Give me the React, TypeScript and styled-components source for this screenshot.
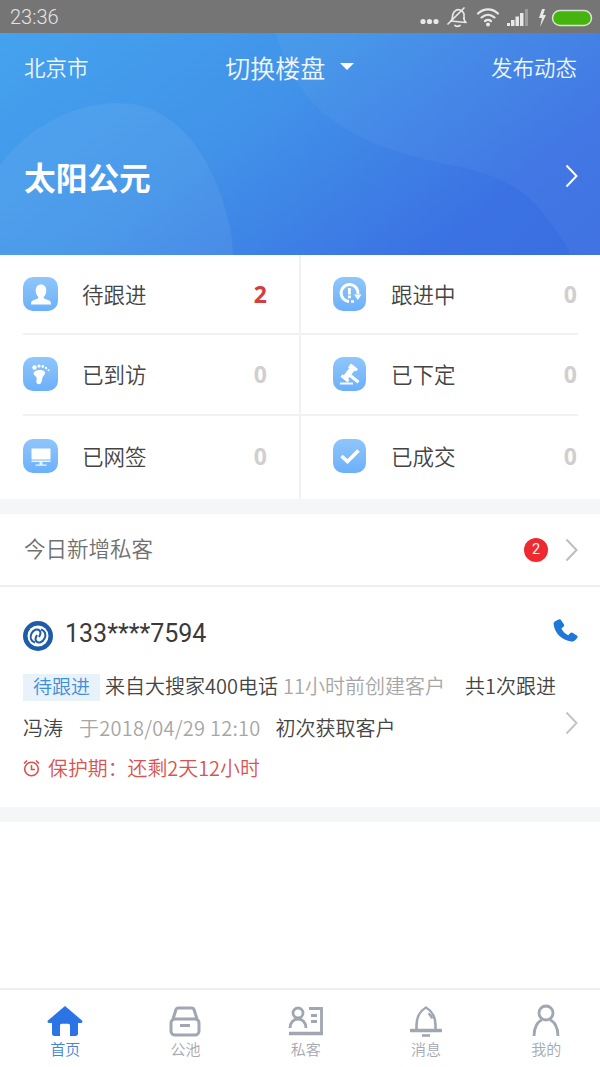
import React from 'react'
import styled, { createGlobalStyle } from 'styled-components'

const GlobalStyle = createGlobalStyle`
  html, body { margin: 0; padding: 0; background: #fff; }
  body { font-family: "Noto Sans CJK SC", "Noto Sans", sans-serif; font-weight: 350; }
  * { box-sizing: border-box; }
`

const Page = styled.div`
  width: 600px;
  height: 1067px;
  display: flex;
  flex-direction: column;
  overflow: hidden;
  background: #fff;
`

const StatusBar = styled.div`
  height: 33px;
  flex: none;
  background: #757575;
  display: flex;
  align-items: center;
  justify-content: space-between;
  padding: 0 0 0 10px;
  color: #e4e4e4;
`

const Clock = styled.span`
  font: 300 20px Roboto, sans-serif;
`

const StatusIcons = styled.div`
  display: flex;
  align-items: center;
`

const Hero = styled.header`
  position: relative;
  height: 222px;
  flex: none;
  overflow: hidden;
  background: linear-gradient(142deg, #45a2ee 0%, #4193e9 40%, #3b72e3 80%, #3a6ee2 100%);
  color: #fff;
`

const HeroShapes = styled.svg`
  position: absolute;
  inset: 0;
`

const HeroTop = styled.div`
  position: relative;
  height: 67px;
  display: flex;
  align-items: center;
  justify-content: space-between;
  padding: 0 23px 0 24px;
`

const HeroSide = styled.span`
  font-size: 21.5px;
  color: #eef6fd;
`

const Switcher = styled.div`
  display: flex;
  align-items: center;
  gap: 15px;
  font-size: 25px;
  color: #eef6fd;
`

const Caret = styled.i`
  width: 0;
  height: 0;
  border-left: 7.5px solid transparent;
  border-right: 7.5px solid transparent;
  border-top: 7px solid #fff;
`

const HeroTitleRow = styled.div`
  position: relative;
  height: 86px;
  margin-top: 33px;
  display: flex;
  align-items: center;
  justify-content: space-between;
  padding: 0 22px 0 24px;
`

const HeroTitle = styled.h1`
  margin: -1px 0 0;
  font-size: 31.7px;
  font-weight: 700;
  color: #fff;
`

const StatGrid = styled.section`
  height: 244px;
  flex: none;
  display: grid;
  grid-template-columns: 300px 300px;
  grid-template-rows: 80px 81px 83px;
`

const StatCell = styled.div<{ $right?: boolean }>`
  padding-left: ${p => (p.$right ? '0' : '23px')};
  padding-right: ${p => (p.$right ? '22px' : '0')};
  border-left: ${p => (p.$right ? '2px solid #f1f2f3' : 'none')};
  margin-left: ${p => (p.$right ? '-1px' : '0')};
`

const StatInner = styled.div<{ $right?: boolean; $last?: boolean }>`
  height: 100%;
  display: flex;
  align-items: center;
  padding: ${p => (p.$last ? '0 0 3px' : '0 0 1px')};
  padding-left: ${p => (p.$right ? '32px' : '0')};
  padding-right: ${p => (p.$right ? '1px' : '33px')};
  border-bottom: ${p => (p.$last ? 'none' : '2px solid #f0f1f2')};
`

const StatIcon = styled.div<{ $right?: boolean }>`
  width: ${p => (p.$right ? '33px' : '35px')};
  height: 34px;
  flex: none;
  border-radius: 10px;
  background: linear-gradient(180deg, #8fc6fb 0%, #6cb0fa 100%);
  display: flex;
  align-items: center;
  justify-content: center;
`

const StatLabel = styled.span<{ $right?: boolean }>`
  flex: 1;
  margin-left: ${p => (p.$right ? '25px' : '24px')};
  margin-top: -1px;
  font-size: 21.5px;
  color: #444;
`

const StatCount = styled.b<{ $hot?: boolean }>`
  font: 700 23px "Open Sans", sans-serif;
  color: ${p => (p.$hot ? '#d23f40' : '#cfcfcf')};
`

const Band = styled.div`
  height: 15px;
  flex: none;
  background: #f5f6f7;
`

const NewRow = styled.div`
  height: 73px;
  flex: none;
  display: flex;
  align-items: center;
  padding: 0 22px 0 24px;
  border-bottom: 2px solid #eeeff0;
`

const NewLabel = styled.span`
  flex: 1;
  margin-top: -5px;
  font-size: 21.5px;
  color: #707070;
`

const Badge = styled.span`
  width: 24px;
  height: 24px;
  margin-right: 17px;
  border-radius: 50%;
  background: #ee2a30;
  color: #fff;
  font: 400 14.5px Roboto, sans-serif;
  display: flex;
  align-items: center;
  justify-content: center;
`

const Card = styled.article`
  position: relative;
  height: 220px;
  flex: none;
  padding: 0 22px 0 23px;
`

const CardHead = styled.div`
  height: 79px;
  padding-top: 19px;
  display: flex;
  align-items: center;
  justify-content: space-between;
`

const Who = styled.div`
  display: flex;
  align-items: center;
  gap: 12px;
`

const Phone = styled.span`
  font: 400 25px Roboto, sans-serif;
  color: #3a3a3a;
  margin-top: -6px;
`

const CardLine = styled.div<{ $h?: number }>`
  height: ${p => p.$h || 42}px;
  display: flex;
  align-items: center;
  white-space: nowrap;
`

const Tag = styled.span`
  width: 77px;
  height: 27px;
  background: #e8f2fb;
  color: #3f8ed9;
  font-size: 19px;
  line-height: 24px;
  text-align: center;
  margin-right: 5px;
`

const Txt = styled.span<{ $muted?: boolean; $gap?: number; $track?: number }>`
  font-size: 20px;
  color: ${p => (p.$muted ? '#a6a6a6' : '#444')};
  margin-left: ${p => p.$gap || 0}px;
  margin-top: -3px;
  letter-spacing: ${p => p.$track || 0}px;
`

const Alert = styled(CardLine)`
  gap: 8px;
  font-size: 19.9px;
  color: #d9534f;
`

const AlertText = styled.span`
  margin-top: -2px;
`

const RowChevron = styled.div`
  position: absolute;
  right: 22px;
  top: 124px;
  display: flex;
`

const Blank = styled.div`
  flex: 1;
`

const TabBar = styled.nav`
  height: 79px;
  flex: none;
  border-top: 2px solid #eeeff0;
  padding-left: 5px;
  display: grid;
  grid-template-columns: repeat(5, 120.3px);
`

const Tab = styled.div<{ $on?: boolean }>`
  display: flex;
  flex-direction: column;
  align-items: center;
  padding-top: 13px;
  font-size: 15px;
  line-height: 20px;
  color: ${p => (p.$on ? '#3f86d8' : '#a4a9b3')};
`

const TabGlyph = styled.div`
  height: 36px;
  display: flex;
  align-items: center;
`

const Chevron = ({ color }: { color: string }) => (
  <svg width="13" height="24" viewBox="0 0 13 24" fill="none">
    <path d="M1.5 1.5 11.5 12 1.5 22.5" stroke={color} strokeWidth="2" />
  </svg>
)

const StatusGlyphs = () => (
  <svg width="185" height="22" viewBox="0 0 185 22" fill="none">
    <g fill="#e8e8e8">
      <circle cx="8" cy="15.500" r="2.600" />
      <circle cx="14.500" cy="15.500" r="2.600" />
      <circle cx="21" cy="15.500" r="2.600" />
    </g>
    {/* muted bell, tilted */}
    <g stroke="#e8e8e8" strokeWidth="1.700" strokeLinecap="round" strokeLinejoin="round">
      <path d="M36 15c2-2 1-4 2-7 1-3 4-5 7-4 3 1 4.500 4 4 7-.4 2 .5 4 2 5.500z" />
      <path d="M40 19.500c1.500 1 3.500 1 5 0M33 18 49 2" />
    </g>
    {/* wifi */}
    <g stroke="#e8e8e8" strokeWidth="2.200" strokeLinecap="round">
      <path d="M63 7.500c6-5.500 14-5.500 20 0M66.500 11.500c4-3.500 9-3.500 13 0M70 15c2-1.500 4-1.500 6 0" />
    </g>
    <circle cx="73" cy="18.500" r="2" fill="#e8e8e8" />
    {/* signal */}
    <g fill="#e8e8e8">
      <rect x="92" y="17" width="3" height="3" />
      <rect x="96" y="14" width="3.500" height="6" />
      <rect x="100.500" y="10.500" width="3.500" height="9.500" />
      <rect x="105" y="7" width="3.500" height="13" />
      <rect x="110" y="3" width="3" height="17" opacity=".35" />
    </g>
    {/* charging bolt */}
    <path d="M127 3h3l-2 6h3l-6 12 2-9h-3z" fill="#e8e8e8" />
    <rect x="137.500" y="4.500" width="39" height="15" rx="7.500" fill="#46b40f" stroke="#d7e4d0" strokeWidth="1.500" />
  </svg>
)

const icons: Record<string, React.ReactNode> = {
  person: (
    <path fill="#fff" d="M13 3.500c3.400 0 5.300 2.600 5.300 6 0 2.600-1 4.800-2.400 6.200-.5.600-.3 1.500.4 1.800l4.300 1.800c1.500.7 2.400 1.700 2.400 3.200v1H3v-1c0-1.500.9-2.500 2.400-3.200l4.300-1.800c.7-.3.900-1.200.4-1.800C8.700 14.300 7.700 12.100 7.700 9.500c0-3.400 1.900-6 5.300-6z" />
  ),
  cycle: (
    <g fill="none">
      <path d="M12 20.500a8.500 8.500 0 1 1 9-7.500" stroke="#fff" strokeWidth="3" />
      <path d="M14 20.500h3" stroke="#fff" strokeWidth="2.500" />
      <path d="M17 13.500h7.500l-3.700 5.500z" fill="#fff" />
      <rect x="11" y="7" width="2.800" height="6.500" fill="#fff" />
      <rect x="11" y="14.500" width="2.800" height="2.800" fill="#fff" />
    </g>
  ),
  foot: (
    <g fill="#fff">
      <path d="M7.500 10c2.500-1.400 8-1.700 9.300 1 1 2.400-2 4-2.500 6.200-.4 2.300-.7 6-3.600 6-2.500 0-2.500-2.800-2-5.500.3-2-2.400-3-3-4.800-.3-1 .5-2.200 1.800-2.900z" />
      <circle cx="6.500" cy="6.500" r="2.200" />
      <circle cx="11" cy="5" r="1.600" />
      <circle cx="14.800" cy="5.500" r="1.400" />
      <circle cx="18" cy="7" r="1.200" />
      <circle cx="20.500" cy="9.300" r="1" />
    </g>
  ),
  gavel: (
    <g fill="#fff">
      <path d="M14 2.500 21 8l-2 2.600-1.500-1-3 4 8 6.500-2 2.400-8-6.400-1.300 1.700 1.300 1.100-2 2.500L3.500 15.800l2-2.500 1.300 1 5.300-7.100-1.100-.9z" />
      <rect x="3" y="21.500" width="13" height="2" />
    </g>
  ),
  screen: (
    <g fill="#fff">
      <path d="M3.500 5.500h19v11h-19z" />
      <path d="M3.500 17.500h19v1.500h-19zM11.500 19h3v2.500h-3zM7.500 21.500h11v1.300h-11z" opacity=".85" />
    </g>
  ),
  check: <path d="M4.500 13 10.500 18.500 21.500 7.500" fill="none" stroke="#fff" strokeWidth="3.600" />,
}

const stats = [
  { icon: 'person', label: '待跟进', count: 2 },
  { icon: 'cycle', label: '跟进中', count: 0 },
  { icon: 'foot', label: '已到访', count: 0 },
  { icon: 'gavel', label: '已下定', count: 0 },
  { icon: 'screen', label: '已网签', count: 0 },
  { icon: 'check', label: '已成交', count: 0 },
]

const tabGlyphs = [
  <svg key="home" width="36" height="32" viewBox="0 0 36 32">
    <path fill="#2b74e6" d="M18 1 35 15.500c1 1 .3 2.500-1 2.500h-3v10.500c0 1.500-1 2.500-2.500 2.500H23V20.500c0-1-.7-1.700-1.700-1.700h-6.600c-1 0-1.700.7-1.700 1.700V31H7.500C6 31 5 30 5 28.500V18H2c-1.300 0-2-1.500-1-2.500z" />
  </svg>,
  <svg key="pool" width="32" height="32" viewBox="0 0 32 32" fill="none" stroke="#a0a6b2" strokeWidth="3">
    <path d="M4 14 7 4.500c.3-1 1-1.500 2-1.500h14c1 0 1.700.5 2 1.500L28 14" />
    <rect x="2" y="14" width="28" height="16" rx="4" />
    <path d="M11 20.500h10" />
  </svg>,
  <svg key="card" width="36" height="30" viewBox="0 0 36 30" fill="none" stroke="#a0a6b2" strokeWidth="2.800">
    <circle cx="10" cy="7" r="5" />
    <path d="M2 22c0-5.500 3.500-9 8-9s8 3.500 8 9" />
    <path d="M21 2.500h12.500V27" />
    <path d="M23 9.500h6M23 15.500h6" />
    <path d="M1 27.500h34" strokeWidth="3.400" />
  </svg>,
  <svg key="bell" width="32" height="32" viewBox="0 0 32 32" fill="none" stroke="#a0a6b2" strokeWidth="2.600">
    <path d="M6.500 25v-5C6.500 13 10 6 16 2.500 22 6 25.500 13 25.500 20v5" strokeLinejoin="round" />
    <path d="M1 25.500h30" strokeWidth="3.400" strokeLinecap="round" />
    <path d="M12 30.500h8" strokeWidth="2.600" />
    <path d="M18.500 8.500c1.500 1 3 3 3.500 5" strokeWidth="2.600" />
  </svg>,
  <svg key="me" width="28" height="34" viewBox="0 0 28 34" fill="none" stroke="#a0a6b2" strokeWidth="2.800">
    <circle cx="14" cy="9" r="7" />
    <path d="M2 32c0-9 4-15 8-16M26 32c0-9-4-15-8-16" />
  </svg>,
]

const tabs = ['首页', '公池', '私客', '消息', '我的']

export default function App() {
  return (
    <Page>
      <GlobalStyle />
      <StatusBar>
        <Clock>23:36</Clock>
        <StatusIcons>
          <StatusGlyphs />
        </StatusIcons>
      </StatusBar>

      <Hero>
        <HeroShapes width="600" height="222" viewBox="0 0 600 222">
          <path
            fill="#fff"
            opacity=".06"
            d="M0 132C30 92 75 70 119 70c46 0 81 35 101 90 9 25 13 45 13 62H0z"
          />
          <path
            fill="#fff"
            opacity=".04"
            d="M276 0c8 30 25 62 50 82 35 28 75 40 134 52 40 8 68 25 86 50 12 16 22 28 24 38h30V0z"
          />
        </HeroShapes>
        <HeroTop>
          <HeroSide>北京市</HeroSide>
          <Switcher>
            切换楼盘
            <Caret />
          </Switcher>
          <HeroSide>发布动态</HeroSide>
        </HeroTop>
        <HeroTitleRow>
          <HeroTitle>太阳公元</HeroTitle>
          <Chevron color="#fff" />
        </HeroTitleRow>
      </Hero>

      <StatGrid>
        {stats.map((s, i) => {
          const right = i % 2 === 1
          const last = i >= 4
          return (
            <StatCell key={s.label} $right={right}>
              <StatInner $right={right} $last={last}>
                <StatIcon $right={right}>
                  <svg width="26" height="26" viewBox="0 0 26 26">
                    {icons[s.icon]}
                  </svg>
                </StatIcon>
                <StatLabel $right={right}>{s.label}</StatLabel>
                <StatCount $hot={s.count > 0}>{s.count}</StatCount>
              </StatInner>
            </StatCell>
          )
        })}
      </StatGrid>

      <Band />

      <NewRow>
        <NewLabel>今日新增私客</NewLabel>
        <Badge>2</Badge>
        <Chevron color="#bdbdbd" />
      </NewRow>

      <Card>
        <CardHead>
          <Who>
            <svg width="30" height="30" viewBox="0 0 30 30" fill="none">
              <circle cx="15" cy="15" r="15" fill="#1f5ca8" />
              <circle cx="15" cy="15" r="10.500" fill="#fff" />
              <path
                d="M12 21.500c-4-1-5.500-5-3.500-9s6-5 8-3c1.500 1.500 1 4-.5 6.500M18 8.500c4 1 5.500 5 3.500 9s-6 5-8 3c-1.500-1.500-1-4 .5-6.500"
                stroke="#1f5ca8"
                strokeWidth="2"
              />
            </svg>
            <Phone>133****7594</Phone>
          </Who>
          <svg width="25" height="24" viewBox="0 0 25 24" style={{ marginTop: -10 }}>
            <path
              fill="#1f78d8"
              d="M6 .5c.8-.5 1.500-.3 2 .4l3 4.600c.4.700.3 1.400-.3 2L8.400 9.600c1.300 3 3.800 5.300 6.800 6.600l2.200-2.200c.6-.6 1.300-.7 2-.3l4.500 2.800c.8.500 1 1.300.5 2.100-1.200 2.200-3.400 4.300-6 4-9.500-1-17-8.600-17.800-17.500C.4 2.800 3.500 1.300 6 .5z"
            />
          </svg>
        </CardHead>
        <CardLine>
          <Tag>待跟进</Tag>
          <Txt>来自大搜家400电话</Txt>
          <Txt $muted $gap={5}>11小时前创建客户</Txt>
          <Txt $gap={20}>共1次跟进</Txt>
        </CardLine>
        <CardLine>
          <Txt>冯涛</Txt>
          <Txt $muted $gap={16} $track={0.25}>于2018/04/29 12:10</Txt>
          <Txt $gap={15}>初次获取客户</Txt>
        </CardLine>
        <Alert $h={36}>
          <svg width="17" height="18" viewBox="0 0 17 18" fill="none" stroke="#d9534f" strokeWidth="1.600">
            <circle cx="8.500" cy="10" r="6.800" />
            <path d="M8.500 6v4.500h3.500M1 4.500 4 1.500M16 4.500l-3-3" />
          </svg>
          <AlertText>保护期：还剩2天12小时</AlertText>
        </Alert>
        <RowChevron>
          <Chevron color="#c4c4c4" />
        </RowChevron>
      </Card>

      <Band />
      <Blank />

      <TabBar>
        {tabs.map((t, i) => (
          <Tab key={t} $on={i === 0}>
            <TabGlyph>{tabGlyphs[i]}</TabGlyph>
            {t}
          </Tab>
        ))}
      </TabBar>
    </Page>
  )
}
